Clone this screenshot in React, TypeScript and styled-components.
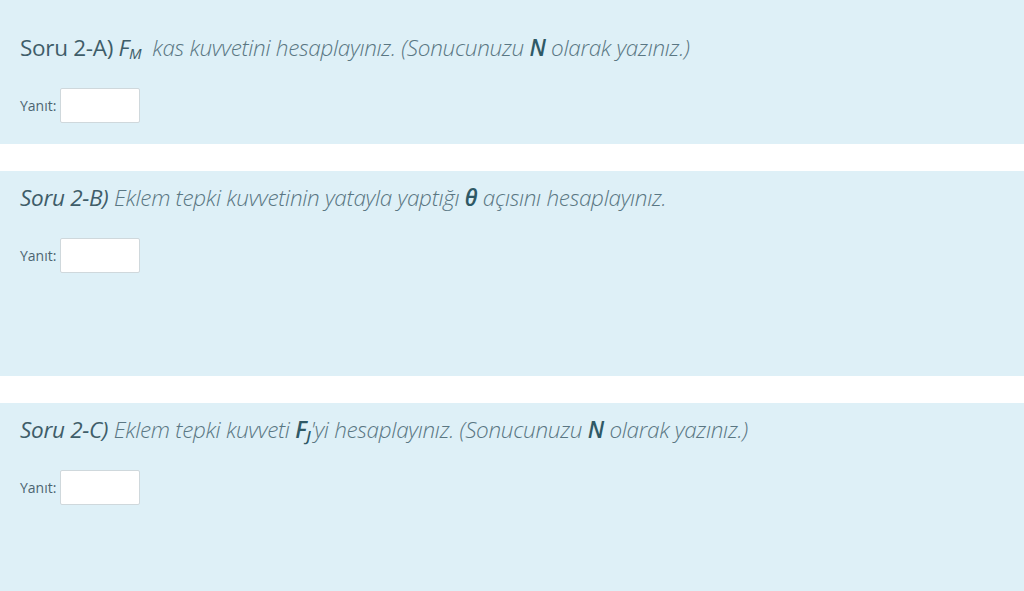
import React from "react";
import styled, { createGlobalStyle } from "styled-components";

const GlobalStyle = createGlobalStyle`
  html, body {
    margin: 0;
    padding: 0;
    background: #ffffff;
  }
  body {
    font-family: "Open Sans", "Noto Sans", sans-serif;
  }
`;

const Page = styled.div`
  display: flex;
  flex-direction: column;
  gap: 27px;
  min-height: 591px;
  overflow: hidden;
`;

const Panel = styled.section<{ $first?: boolean; $height?: number }>`
  background: #def0f7;
  box-sizing: border-box;
  padding: ${(p) => (p.$first ? "34px" : "13px")} 20px 0;
  height: ${(p) => (p.$height ? `${p.$height}px` : "auto")};
  flex: ${(p) => (p.$height ? "0 0 auto" : "1 1 auto")};
`;

const Title = styled.div`
  font-size: 22.5px;
  line-height: 28px;
  font-weight: 300;
  color: #5a7783;
  white-space: nowrap;
  letter-spacing: -0.3px;
`;

const Label = styled.span<{ $italic?: boolean }>`
  color: #3f5d69;
  font-weight: 400;
  font-style: ${(p) => (p.$italic ? "italic" : "normal")};
`;

const Var = styled.span`
  font-style: italic;
  font-weight: 400;
  color: #3f5d69;
`;

const Sub = styled.sub`
  font-size: 15px;
  vertical-align: -3px;
  line-height: 0;
`;

const Body = styled.span`
  font-style: italic;
  font-weight: 300;
`;

const Strong = styled.b`
  font-weight: 600;
  color: #2f5966;
`;

const AnswerRow = styled.div`
  display: flex;
  align-items: center;
  gap: 4px;
  margin-top: 26px;
`;

const AnswerLabel = styled.span`
  font-size: 14px;
  color: #4c6571;
`;

const AnswerInput = styled.input`
  box-sizing: border-box;
  width: 80px;
  height: 35px;
  margin: 0;
  background: #ffffff;
  border: 1px solid #cfd8dc;
  border-radius: 2px;
  outline: none;
`;

type Question = {
  id: string;
  title: React.ReactNode;
  height?: number;
};

function getQuestions(): Question[] {
  return [
    {
      id: "a",
      height: 144,
      title: (
        <>
          <Label>Soru 2-A)</Label>{" "}
          <Var>
            F<Sub>M</Sub>
          </Var>
          {"\u00a0 "}
          <Body>
            kas kuvvetini hesaplayınız. (Sonucunuzu <Strong>N</Strong> olarak
            yazınız.)
          </Body>
        </>
      ),
    },
    {
      id: "b",
      height: 205,
      title: (
        <>
          <Label $italic>Soru 2-B)</Label>{" "}
          <Body>
            Eklem tepki kuvvetinin yatayla yaptığı <Strong>θ</Strong> açısını
            hesaplayınız.
          </Body>
        </>
      ),
    },
    {
      id: "c",
      title: (
        <>
          <Label $italic>Soru 2-C)</Label>{" "}
          <Body>
            Eklem tepki kuvveti{" "}
            <Strong>
              F<Sub>J</Sub>
            </Strong>
            'yi hesaplayınız. (Sonucunuzu <Strong>N</Strong> olarak yazınız.)
          </Body>
        </>
      ),
    },
  ];
}

export default function App() {
  const questions = getQuestions();
  return (
    <>
      <GlobalStyle />
      <Page>
        {questions.map((q, i) => (
          <Panel key={q.id} $first={i === 0} $height={q.height}>
            <Title>{q.title}</Title>
            <AnswerRow>
              <AnswerLabel>Yanıt:</AnswerLabel>
              <AnswerInput type="text" />
            </AnswerRow>
          </Panel>
        ))}
      </Page>
    </>
  );
}
